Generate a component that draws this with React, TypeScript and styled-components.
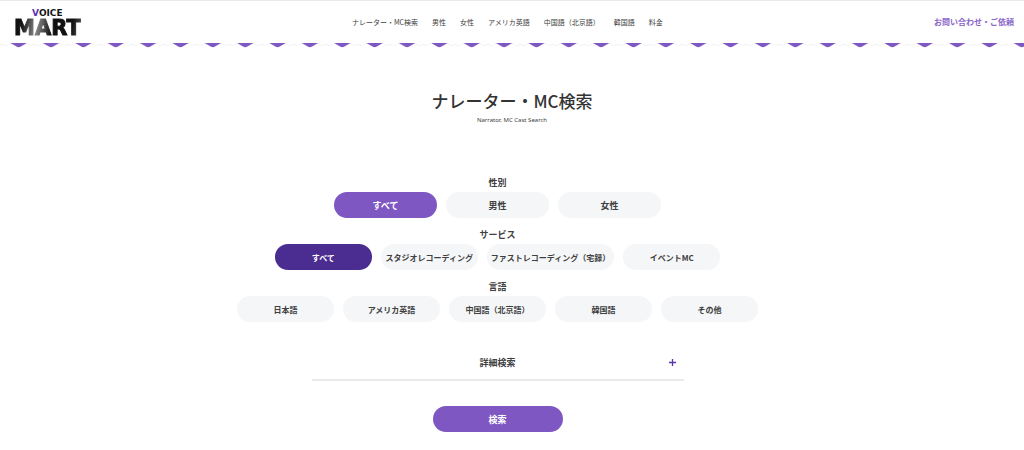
import React, { useState } from "react";
import styled, { createGlobalStyle, css } from "styled-components";

const GlobalStyle = createGlobalStyle`
  * { box-sizing: border-box; }
  body {
    margin: 0;
    background: #fff;
    color: #404040;
    font-family: "Noto Sans CJK JP", sans-serif;
  }
  button, input { font: inherit; }
  a { color: inherit; text-decoration: none; }
`;

const Header = styled.header`
  display: flex;
  justify-content: space-between;
  align-items: center;
  height: 43px;
  padding: 0 10px 0 14px;
  border-top: 1px solid #ebebeb;
`;

const Logo = styled.a`
  display: flex;
  flex-direction: column;
  align-items: center;
  padding-top: 2px;
  font-family: "DejaVu Sans", sans-serif;
  font-weight: 700;
  color: #151515;
`;

const LogoTop = styled.span`
  font-size: 9px;
  line-height: 10px;
`;

const LogoAccent = styled.span`
  color: #5a2fb5;
`;

const LogoMain = styled.span`
  font-size: 21px;
  line-height: 20px;
  background: linear-gradient(100deg, #111 12%, #888 34%, #111 56%, #111 84%, #555 100%);
  background-clip: text;
  color: transparent;
  -webkit-text-stroke: 1px transparent;
`;

const Nav = styled.nav`
  display: flex;
  gap: 14px;
  font-size: 7px;
  line-height: 12px;
  white-space: nowrap;
`;

const Contact = styled.a`
  font-size: 8px;
  line-height: 12px;
  font-weight: 700;
  && { color: #8a66c9; }
`;

const Awning = styled.svg`
  display: block;
  width: 100%;
  height: 5px;
`;

const PageHead = styled.div`
  padding: 41px 16px 47px;
  text-align: center;
`;

const Title = styled.h1`
  margin: 0;
  font-size: 17px;
  line-height: 24px;
  font-weight: 500;
  color: #333;
`;

const Subtitle = styled.p`
  margin: 0;
  font-family: "Noto Sans", sans-serif;
  font-size: 6px;
  line-height: 14px;
`;

const Form = styled.form`
  display: flex;
  flex-direction: column;
  align-items: center;
  padding: 0 29px 18px 0;
`;

const Group = styled.fieldset`
  min-width: 0;
  margin: 0 0 8px;
  padding: 0;
  border: 0;
`;

const Legend = styled.legend`
  margin: 0 auto;
  padding: 0;
  font-size: 9px;
  line-height: 18px;
  font-weight: 700;
`;

const Options = styled.div`
  display: flex;
  flex-wrap: wrap;
  justify-content: center;
  gap: 9px;
`;

const Radio = styled.input`
  appearance: none;
  position: absolute;
  inset: 0;
  margin: 0;
  border-radius: 13px;
  cursor: pointer;
`;

const Pill = styled.label<{ $large?: boolean; $tone: string }>`
  position: relative;
  display: flex;
  align-items: center;
  justify-content: center;
  min-width: ${(p) => (p.$large ? 103 : 97)}px;
  height: 26px;
  padding: 0 4px;
  border-radius: 13px;
  background: #f4f6f8;
  font-size: ${(p) => (p.$large ? 9 : 8)}px;
  font-weight: 700;
  white-space: nowrap;
  &:has(input:checked) {
    background: ${(p) => p.$tone};
    color: #fff;
  }
`;

const buttonReset = css`
  border: 0;
  cursor: pointer;
  font-size: 9px;
  font-weight: 700;
`;

const DetailToggle = styled.button`
  ${buttonReset}
  display: grid;
  grid-template-columns: 1fr auto 1fr;
  align-items: center;
  width: 100%;
  max-width: 372px;
  height: 36px;
  margin-top: 15px;
  padding: 0 8px;
  border-bottom: 2px solid #ebebeb;
  background: none;
  color: #404040;
`;

const PlusIcon = styled.svg`
  grid-column: 3;
  justify-self: end;
  width: 7px;
  height: 7px;
`;

const DetailLabel = styled.span`
  grid-column: 2;
`;

const Submit = styled.button`
  ${buttonReset}
  width: 130px;
  height: 26px;
  margin-top: 25px;
  border-radius: 13px;
  background: #7e57c2;
  color: #fff;
`;

const navItems = ["ナレーター・MC検索", "男性", "女性", "アメリカ英語", "中国語（北京語）", "韓国語", "料金"];

const groups = [
  { name: "gender", legend: "性別", large: true, tone: "#7e57c2", options: ["すべて", "男性", "女性"] },
  {
    name: "service",
    legend: "サービス",
    large: false,
    tone: "#4b2c90",
    options: ["すべて", "スタジオレコーディング", "ファストレコーディング（宅録）", "イベントMC"],
  },
  {
    name: "language",
    legend: "言語",
    large: false,
    tone: "#7e57c2",
    options: ["日本語", "アメリカ英語", "中国語（北京語）", "韓国語", "その他"],
  },
];

export default function App() {
  const [selected, setSelected] = useState<Record<string, string>>({ gender: "すべて", service: "すべて" });
  const [open, setOpen] = useState(false);

  return (
    <>
      <GlobalStyle />
      <Header>
        <Logo href="#">
          <LogoTop>
            <LogoAccent>V</LogoAccent>OICE
          </LogoTop>
          <LogoMain>MART</LogoMain>
        </Logo>
        <Nav>
          {navItems.map((item) => (
            <a href="#" key={item}>{item}</a>
          ))}
        </Nav>
        <Contact href="#">お問い合わせ・ご依頼</Contact>
      </Header>
      <Awning aria-hidden="true">
        <defs>
          <pattern id="awning" x="2.5" width="32.36" height="5" patternUnits="userSpaceOnUse">
            <path d="M0 1 Q4 4.5 8 0 M24.4 0 Q28 4.5 32.4 1" fill="none" stroke="#f4f4f6" />
            <path d="M8 0H24.4L18.4 3.6Q16.2 4.8 14 3.6Z" fill="#7e57c2" />
          </pattern>
        </defs>
        <rect width="100%" height="5" fill="url(#awning)" />
      </Awning>
      <main>
        <PageHead>
          <Title>ナレーター・MC検索</Title>
          <Subtitle>Narrator, MC Cast Search</Subtitle>
        </PageHead>
        <Form onSubmit={(e) => e.preventDefault()}>
          {groups.map((group) => (
            <Group key={group.name}>
              <Legend>{group.legend}</Legend>
              <Options>
                {group.options.map((option) => (
                  <Pill key={option} $large={group.large} $tone={group.tone}>
                    <Radio
                      type="radio"
                      name={group.name}
                      value={option}
                      checked={selected[group.name] === option}
                      onChange={() => setSelected({ ...selected, [group.name]: option })}
                    />
                    {option}
                  </Pill>
                ))}
              </Options>
            </Group>
          ))}
          <DetailToggle type="button" aria-expanded={open} onClick={() => setOpen(!open)}>
            <DetailLabel>詳細検索</DetailLabel>
            <PlusIcon viewBox="0 0 7 7" aria-hidden="true">
              <path d={open ? "M0 3.5H7" : "M0 3.5H7M3.5 0V7"} stroke="#5a35a8" strokeWidth="1.3" />
            </PlusIcon>
          </DetailToggle>
          <Submit type="submit">検索</Submit>
        </Form>
      </main>
    </>
  );
}
